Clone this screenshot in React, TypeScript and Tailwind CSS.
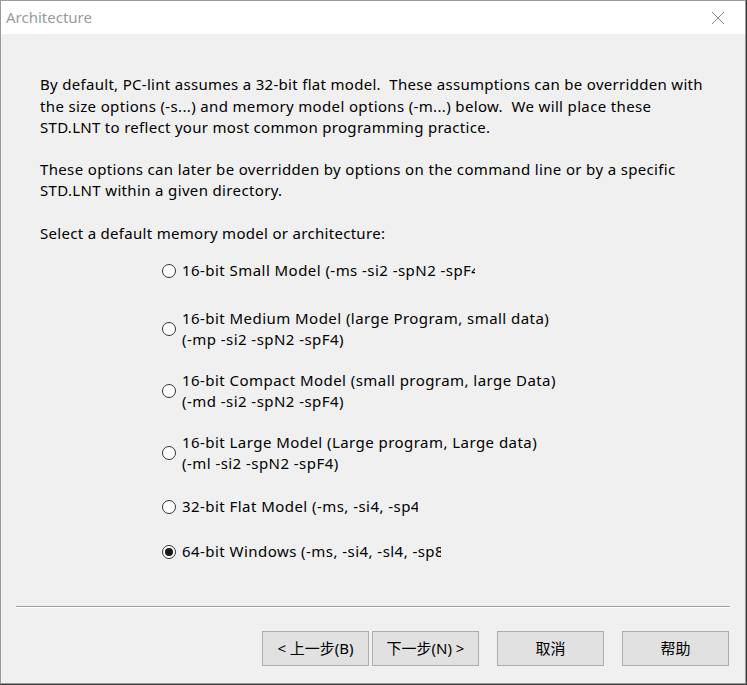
const options = [
  { lines: ["16-bit Small Model (-ms -si2 -spN2 -spF4)"], w: "w-[293px]", mt: "mt-[16px]" },
  { lines: ["16-bit Medium Model (large Program, small data)", "(-mp -si2 -spN2 -spF4)"], w: "w-[380px]", mt: "mt-[27px]" },
  { lines: ["16-bit Compact Model (small program, large Data)", "(-md -si2 -spN2 -spF4)"], w: "w-[380px]", mt: "mt-[20px]" },
  { lines: ["16-bit Large Model (Large program, Large data)", "(-ml -si2 -spN2 -spF4)"], w: "w-[380px]", mt: "mt-[20px]" },
  { lines: ["32-bit Flat Model (-ms, -si4, -sp4)"], w: "w-[236px]", mt: "mt-[22px]" },
  { lines: ["64-bit Windows (-ms, -si4, -sl4, -sp8)"], w: "w-[259px]", mt: "mt-[24px]" },
];

function Radio({ checked }: { checked: boolean }) {
  return (
    <span className="flex h-[14px] w-[14px] shrink-0 items-center justify-center rounded-full border border-[#333333] bg-white">
      {checked && <span className="h-[8px] w-[8px] rounded-full bg-[#1a1a1a]" />}
    </span>
  );
}

export default function App() {
  const selected = 5;
  return (
    <div className="h-[685px] w-[747px] bg-[#3b3b3b]" style={{ fontFamily: '"Noto Sans", "Noto Sans CJK SC", sans-serif' }}>
      <div className="flex h-[684px] w-[746px] flex-col border border-[#9a9a9a] bg-[#f0f0f0]">
        {/* title bar */}
        <div className="flex h-[33px] items-center justify-between bg-white pl-[5px] pr-[20px]">
          <span className="text-[15px] text-[#9a9a9a]">Architecture</span>
          <svg width="14" height="14" viewBox="0 0 14 14" className="stroke-[#8a8a8a]">
            <path d="M1 1 L13 13 M13 1 L1 13" strokeWidth="1" fill="none" />
          </svg>
        </div>

        <div className="flex-1 whitespace-nowrap px-[39px] pt-[40px] text-[15px] leading-[21.5px] tracking-[0.3px] text-black">
          <p>
            By default, PC-lint assumes a 32-bit flat model.&nbsp; These assumptions can be overridden with
            <br />
            <span className="tracking-[0.35px]">
              the size options (-s...) and memory model options (-m...) below.&nbsp; We will place these
            </span>
            <br />
            STD.LNT to reflect your most common programming practice.
          </p>
          <p className="mt-[20px] tracking-[0.35px]">
            These options can later be overridden by options on the command line or by a specific
            <br />
            STD.LNT within a given directory.
          </p>
          <p className="mt-[21px]">Select a default memory model or architecture:</p>

          <div className="ml-[122px] flex flex-col">
            {options.map((o, i) => (
              <div key={i} className={`flex items-center gap-[6px] ${o.mt}`}>
                <Radio checked={i === selected} />
                <div className={`${o.w} overflow-hidden leading-[21px] tracking-[0.45px]`}>
                  {o.lines.map((l, j) => (
                    <div key={j}>{l}</div>
                  ))}
                </div>
              </div>
            ))}
          </div>
        </div>

        {/* separator */}
        <div className="mx-[15px] h-[2px] border-t border-t-[#a0a0a0] border-b border-b-white" />

        <div className="flex h-[75px] items-start pl-[261px] pt-[23px]">
          <button className="h-[35px] w-[107px] border border-[#adadad] bg-[#e1e1e1] text-[15px] text-black">
            &lt; 上一步(B)
          </button>
          <button className="ml-[3px] h-[35px] w-[107px] border border-[#adadad] bg-[#e1e1e1] text-[15px] text-black">
            下一步(N) &gt;
          </button>
          <button className="ml-[18px] h-[35px] w-[107px] border border-[#adadad] bg-[#e1e1e1] text-[15px] text-black">
            取消
          </button>
          <button className="ml-[18px] h-[35px] w-[107px] border border-[#adadad] bg-[#e1e1e1] text-[15px] text-black">
            帮助
          </button>
        </div>
      </div>
    </div>
  );
}
